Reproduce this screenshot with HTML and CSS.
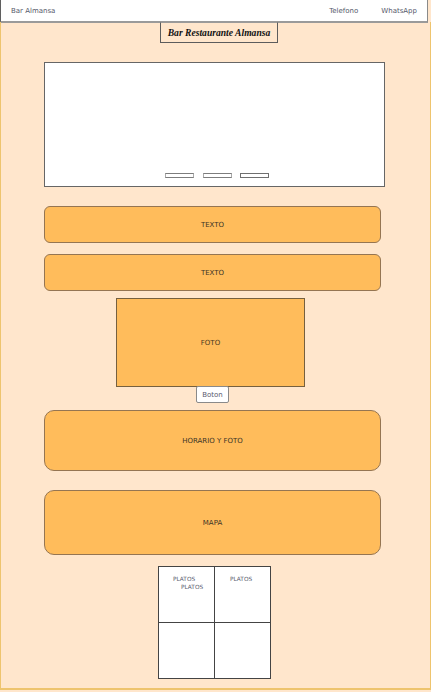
FILE: index.html
```html
<!DOCTYPE html>
<html lang="es">
<head>
<meta charset="utf-8">
<title>Bar Almansa</title>
<link rel="stylesheet" href="styles.css">
</head>
<body>
<header class="topbar">
  <span class="brand">Bar Almansa</span>
  <nav class="links">
    <span class="link">Telefono</span>
    <span class="link">WhatsApp</span>
  </nav>
</header>
<main class="canvas">
  <div class="title">Bar Restaurante Almansa</div>
  <div class="slider">
    <div class="dots">
      <span class="dot"></span>
      <span class="dot dot-b"></span>
      <span class="dot dot-c"></span>
    </div>
  </div>
  <div class="block text-a">TEXTO</div>
  <div class="block text-b">TEXTO</div>
  <div class="photo">FOTO</div>
  <div class="button">Boton</div>
  <div class="block big horario">HORARIO Y FOTO</div>
  <div class="block big mapa">MAPA</div>
  <div class="dishes">
    <div class="cell"><span class="l1">PLATOS</span><span class="l2">PLATOS</span></div>
    <div class="cell"><span class="r1">PLATOS</span></div>
    <div class="cell"></div>
    <div class="cell"></div>
  </div>
</main>
</body>
</html>
```
FILE: styles.css
```css
html, body {
  margin: 0;
  padding: 0;
}
body {
  width: 431px;
  height: 692px;
  background: #FFE6CC;
  font-family: "DejaVu Sans", Verdana, sans-serif;
  overflow: hidden;
}
.topbar {
  box-sizing: border-box;
  width: 428px;
  height: 23px;
  background: #fff;
  border-left: 1px solid #5f5f5f;
  border-right: 1px solid #8a8a8a;
  border-bottom: 2px solid #9a9a9a;
  display: flex;
  align-items: center;
  justify-content: space-between;
  padding: 0 10px 0 10px;
  font-size: 7px;
  color: #56596b;
}
.links {
  display: flex;
  gap: 23px;
}
.canvas {
  box-sizing: border-box;
  width: 431px;
  height: 668px;
  margin-top: -1px;
  border-left: 1px solid #EEC46E;
  border-right: 1px solid #EEC46E;
  border-bottom: 2px solid #EEC46E;
  display: flex;
  flex-direction: column;
  align-items: flex-start;
}
.title {
  box-sizing: border-box;
  margin-left: 159px;
  width: 118px;
  height: 21px;
  border: 1px solid #5c5c5c;
  border-top-color: transparent;
  display: flex;
  align-items: center;
  justify-content: center;
  font-family: "Liberation Serif", "Times New Roman", serif;
  font-weight: bold;
  font-style: italic;
  font-size: 9.6px;
  color: #111;
}
.slider {
  box-sizing: border-box;
  margin-top: 19px;
  margin-left: 43px;
  width: 341px;
  height: 125px;
  background: #fff;
  border: 1.5px solid #666;
  display: flex;
  align-items: flex-end;
}
.dots {
  display: flex;
  gap: 9px;
  margin-left: 120px;
  margin-bottom: 8px;
}
.dot {
  box-sizing: border-box;
  width: 29px;
  height: 5px;
  background: #fff;
  border: 1px solid #7d7d7d;
  border-left-color: #aaa;
  border-right-color: #aaa;
}
.dot-c {
  margin-left: -1px;
  border-color: #6f6f6f;
}
.block {
  box-sizing: border-box;
  margin-left: 43px;
  width: 337px;
  background: #FFBC5B;
  border: 1px solid #957552;
  border-radius: 6px;
  display: flex;
  align-items: center;
  justify-content: center;
  font-size: 7px;
  color: #3b3426;
}
.text-a {
  margin-top: 19px;
  height: 37px;
}
.text-b {
  margin-top: 11px;
  height: 37px;
}
.photo {
  box-sizing: border-box;
  margin-top: 7px;
  margin-left: 115px;
  width: 189px;
  height: 89px;
  background: #FFBC5B;
  border: 1.5px solid #76603f;
  display: flex;
  align-items: center;
  justify-content: center;
  font-size: 7px;
  color: #4a3a20;
}
.button {
  box-sizing: border-box;
  margin-top: -1px;
  margin-left: 195px;
  width: 33px;
  height: 17px;
  background: #fff;
  border: 1px solid #8a8a8a;
  border-radius: 2px;
  display: flex;
  align-items: center;
  justify-content: center;
  font-size: 7px;
  color: #5a5a6e;
}
.big {
  border-radius: 10px;
}
.horario {
  margin-top: 7px;
  height: 61px;
}
.mapa {
  margin-top: 19px;
  height: 65px;
}
.dishes {
  box-sizing: border-box;
  margin-top: 11px;
  margin-left: 157px;
  width: 113px;
  height: 113px;
  border: 1px solid #444;
  background: #444;
  display: grid;
  grid-template-columns: 55px 55px;
  grid-template-rows: 55px 55px;
  gap: 1px;
}
.cell {
  background: #fff;
  display: flex;
  flex-direction: column;
  align-items: flex-start;
  padding-top: 8px;
  font-size: 5.8px;
  line-height: 8px;
  color: #5b6070;
}
.l1 {
  margin-left: 14px;
}
.l2 {
  margin-left: 22px;
}
.r1 {
  margin-left: 15px;
}
```
